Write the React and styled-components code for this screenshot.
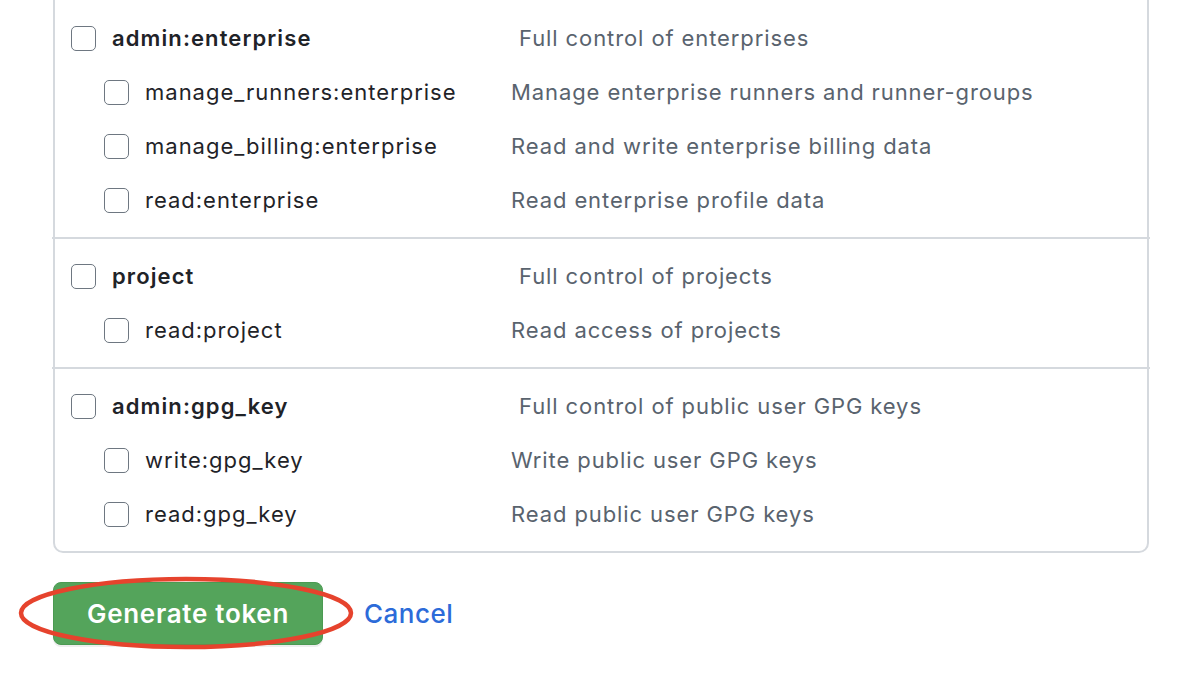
import React from 'react';
import styled, { createGlobalStyle } from 'styled-components';

const Global = createGlobalStyle`
  body {
    margin: 0;
    background: #ffffff;
    font-family: Inter, "Noto Sans", "Liberation Sans", sans-serif;
    color: #1f2328;
  }
`;

const Page = styled.div`
  width: 1200px;
  height: 675px;
  overflow: hidden;
  padding-left: 53px;
  box-sizing: border-box;
`;

const ScopeBox = styled.div`
  width: 1096px;
  margin-top: -12px;
  border: 2px solid #d5d9de;
  border-radius: 10px;
  box-sizing: border-box;
`;

const Group = styled.div`
  padding: 10px 0;

  &:first-child {
    padding-top: 21px;
  }
`;

const Divider = styled.div`
  height: 2px;
  background: #d5d9de;
  margin: 0 -3px;
`;

const Row = styled.div`
  display: flex;
  align-items: center;
  height: 54px;
  padding-left: ${p => (p.sub ? '49px' : '16px')};
`;

const LabelCell = styled.label`
  display: flex;
  align-items: center;
  gap: 16px;
  width: ${p => (p.sub ? '407px' : '448px')};
  flex-shrink: 0;
`;

const Check = styled.span`
  width: 25px;
  height: 25px;
  box-sizing: border-box;
  border: 1.5px solid #6e7781;
  border-radius: 5px;
  background: #fff;
  flex-shrink: 0;
`;

const Name = styled.span`
  font-size: 22px;
  font-weight: ${p => (p.sub ? 400 : 600)};
  color: #1f2328;
  letter-spacing: ${p => (p.sub ? '1px' : '1.1px')};
`;

const Desc = styled.span`
  font-size: 22px;
  color: #59636e;
  letter-spacing: 0.9px;
`;

const Actions = styled.div`
  display: flex;
  align-items: center;
  margin-top: 29px;
  gap: 41px;
`;

const ButtonWrap = styled.div`
  position: relative;
`;

const PrimaryButton = styled.button`
  width: 270px;
  height: 63px;
  border: 1px solid #4b9a52;
  border-radius: 8px;
  background: #54a45b;
  color: #ffffff;
  font-family: Inter, "Liberation Sans", sans-serif;
  font-size: 26px;
  font-weight: 600;
  letter-spacing: 0.7px;
  box-shadow: 0 2px 0 rgba(31, 35, 40, 0.08);
  cursor: pointer;
`;

const Ring = styled.svg`
  position: absolute;
  left: -36px;
  top: -8px;
  pointer-events: none;
`;

const CancelLink = styled.a`
  font-size: 26px;
  font-weight: 500;
  color: #2c6bd9;
  letter-spacing: 0.5px;
  text-decoration: none;
`;

const groups = [
  {
    name: 'admin:enterprise',
    desc: 'Full control of enterprises',
    children: [
      ['manage_runners:enterprise', 'Manage enterprise runners and runner-groups'],
      ['manage_billing:enterprise', 'Read and write enterprise billing data'],
      ['read:enterprise', 'Read enterprise profile data'],
    ],
  },
  {
    name: 'project',
    desc: 'Full control of projects',
    children: [['read:project', 'Read access of projects']],
  },
  {
    name: 'admin:gpg_key',
    desc: 'Full control of public user GPG keys',
    children: [
      ['write:gpg_key', 'Write public user GPG keys'],
      ['read:gpg_key', 'Read public user GPG keys'],
    ],
  },
];

const ScopeRow = ({ name, desc, sub }) => (
  <Row sub={sub}>
    <LabelCell sub={sub}>
      <Check />
      <Name sub={sub}>{name}</Name>
    </LabelCell>
    <Desc>{desc}</Desc>
  </Row>
);

export default function App() {
  return (
    <Page>
      <Global />
      <ScopeBox>
        {groups.map((g, i) => (
          <React.Fragment key={g.name}>
            {i > 0 && <Divider />}
            <Group>
              <ScopeRow name={g.name} desc={g.desc} />
              {g.children.map(([n, d]) => (
                <ScopeRow key={n} name={n} desc={d} sub />
              ))}
            </Group>
          </React.Fragment>
        ))}
      </ScopeBox>
      <Actions>
        <ButtonWrap>
          <PrimaryButton>Generate token</PrimaryButton>
          <Ring width="340" height="80" viewBox="0 0 340 80">
            <ellipse cx="169" cy="39" rx="165" ry="34" fill="none" stroke="#e6432d" strokeWidth="4.5" />
          </Ring>
        </ButtonWrap>
        <CancelLink href="#">Cancel</CancelLink>
      </Actions>
    </Page>
  );
}
